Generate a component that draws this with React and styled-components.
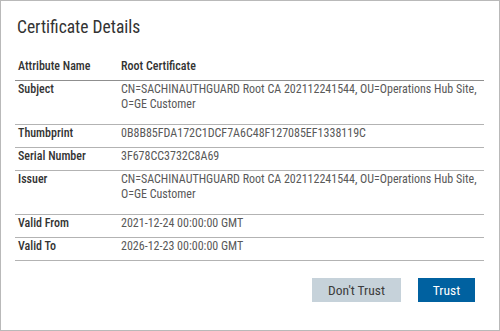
import React from "react";
import styled, { createGlobalStyle } from "styled-components";

const Global = createGlobalStyle`
  html, body {
    margin: 0;
    padding: 0;
    background: #ffffff;
  }
  body {
    font-family: "Roboto Condensed", Roboto, sans-serif;
  }
`;

const Dialog = styled.div`
  box-sizing: border-box;
  width: 500px;
  height: 331px;
  border: 1px solid #b9b9b9;
  background: #fff;
  padding: 14px 15px 0 14px;
  display: flex;
  flex-direction: column;
`;

const Title = styled.h2`
  margin: 0 0 0 2px;
  font-size: 17.5px;
  font-weight: 400;
  color: #333;
  line-height: 24px;
`;

const Table = styled.table`
  width: 469px;
  margin-top: 16px;
  border-collapse: collapse;
  table-layout: fixed;
  font-size: 12px;
  line-height: 15px;
`;

const HeadCell = styled.th`
  text-align: left;
  font-weight: 500;
  color: #333;
  padding: 4px 0 6px 3px;
  border-bottom: 1px solid #8f8f8f;
  width: ${p => p.$w || "auto"};
`;

const Row = styled.tr`
  border-bottom: 1px solid #b3b3b3;
`;

const Label = styled.td`
  vertical-align: top;
  font-weight: 500;
  color: #333;
  padding: 1px 0 ${p => (p.$tall ? "12px" : "6px")} 3px;
`;

const Value = styled.td`
  vertical-align: top;
  color: #595959;
  padding: 1px 0 ${p => (p.$tall ? "12px" : "6px")} 3px;
`;

const Actions = styled.div`
  display: flex;
  justify-content: flex-end;
  gap: 17px;
  margin-top: 17px;
  padding-right: 9px;
`;

const Button = styled.button`
  height: 24px;
  width: ${p => (p.$primary ? "57px" : "89px")};
  padding: 0;
  border: none;
  font-family: inherit;
  font-size: 13.5px;
  color: ${p => (p.$primary ? "#ffffff" : "#3c3c3c")};
  background: ${p => (p.$primary ? "#0061a0" : "#c6d2da")};
  cursor: pointer;
`;

const rows = [
  {
    name: "Subject",
    value: "CN=SACHINAUTHGUARD Root CA 202112241544, OU=Operations Hub Site, O=GE Customer",
    tall: true,
  },
  { name: "Thumbprint", value: "0B8B85FDA172C1DCF7A6C48F127085EF1338119C" },
  { name: "Serial Number", value: "3F678CC3732C8A69" },
  {
    name: "Issuer",
    value: "CN=SACHINAUTHGUARD Root CA 202112241544, OU=Operations Hub Site, O=GE Customer",
    tall: true,
  },
  { name: "Valid From", value: "2021-12-24 00:00:00 GMT" },
  { name: "Valid To", value: "2026-12-23 00:00:00 GMT" },
];

export default function App() {
  return (
    <>
      <Global />
      <Dialog>
        <Title>Certificate Details</Title>
        <Table>
          <thead>
            <tr>
              <HeadCell $w="100px">Attribute Name</HeadCell>
              <HeadCell>Root Certificate</HeadCell>
            </tr>
          </thead>
          <tbody>
            {rows.map(r => (
              <Row key={r.name}>
                <Label $tall={r.tall}>{r.name}</Label>
                <Value $tall={r.tall}>{r.value}</Value>
              </Row>
            ))}
          </tbody>
        </Table>
        <Actions>
          <Button>Don't Trust</Button>
          <Button $primary>Trust</Button>
        </Actions>
      </Dialog>
    </>
  );
}
